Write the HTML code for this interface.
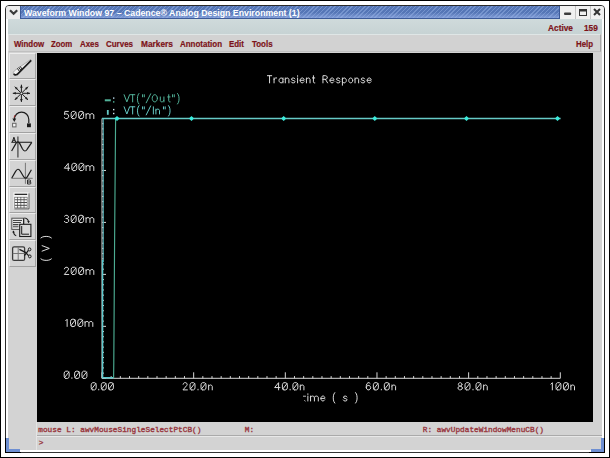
<!DOCTYPE html>
<html><head><meta charset="utf-8">
<style>
html,body{margin:0;padding:0;}
body{width:610px;height:458px;overflow:hidden;background:#fff;position:relative;font-family:"Liberation Sans",sans-serif;}
#outer{position:absolute;left:0;top:0;width:608px;height:456px;border:1px solid #000;}
#win{position:absolute;left:5px;top:5px;width:598px;height:446px;border:1px solid #2a2a2a;border-radius:4px 4px 0 0;background:#d3d3d3;}
#title{position:absolute;left:20px;top:6px;width:540px;border-right:1px solid #3c5a98;border-left:1px solid #3c5a98;height:13px;background:#5b7fc4;background-image:linear-gradient(rgba(255,255,255,0) 0%,rgba(255,255,255,0) 55%,rgba(150,175,230,0.7) 100%),repeating-linear-gradient(135deg,rgba(255,255,255,0.16) 0 1px,rgba(0,0,0,0.07) 1px 3px);border-bottom:1px solid #3c5a98;box-sizing:border-box;}
#ttext{position:absolute;left:24.4px;top:7px;font-size:9px;line-height:13px;font-weight:bold;color:#fff;white-space:nowrap;transform-origin:0 0;transform:scaleX(0.974);opacity:0.999;}
.mb{position:absolute;left:6px;top:6px;width:14px;height:13px;background:#ececec;border-radius:3px 0 0 0;}
.tb{position:absolute;top:6px;width:14px;height:13px;background:#f0f0f0;border-left:1px solid #c4c4c4;box-sizing:border-box;}
#info{position:absolute;left:8px;top:19px;width:594px;height:15px;background:linear-gradient(#cfdadb,#c7d3d4);}
#lw{position:absolute;left:6px;top:19px;width:2px;height:431px;background:#fff;}
#rw{position:absolute;left:602px;top:19px;width:2px;height:431px;background:#fff;}
#bw{position:absolute;left:6px;top:450px;width:598px;height:2px;background:#fff;border-bottom:1px solid #333;}
#menu{position:absolute;left:8px;top:34px;width:593px;height:18px;background:#d2d2d2;border:1px solid;border-color:#dfe6e6 #a8a8a8 #c0c0c0 #e0e0e0;box-sizing:border-box;}
.mi{position:absolute;font-size:9px;font-weight:bold;color:#7c1218;line-height:10px;height:10px;white-space:nowrap;opacity:0.999;-webkit-text-stroke:0.2px #7c1218;}
#plot{position:absolute;left:37px;top:53px;width:556px;height:369px;background:#000;}
.tbtn{position:absolute;left:9px;width:25px;background:#d4d4d4;border:1px solid;border-color:#ededed #a2a2a2 #a2a2a2 #ededed;box-sizing:content-box;}
.tbtn svg{position:absolute;left:0;top:0}
.st{position:absolute;top:425px;font-family:"Liberation Mono",monospace;font-size:7.78px;line-height:10px;font-weight:normal;color:#942e36;-webkit-text-stroke:0.35px #9a3a42;white-space:nowrap;opacity:0.999;}
#vsep{position:absolute;left:36px;top:422px;width:1px;height:28px;background:#e4e4e4;}
#sep{position:absolute;left:37px;top:435px;width:565px;height:1px;background:#aaa;border-bottom:1px solid #e8e8e8;}
.rc{position:absolute;background:#6e8fd2;}
</style></head><body>
<div id="outer"></div>
<div id="win"></div>
<div class="mb"></div>
<div id="title"></div>
<div id="ttext">Waveform Window 97 – Cadence® Analog Design Environment (1)</div>
<div class="tb" style="left:560px;width:15px;border-left:0"></div><div class="tb" style="left:575px;width:15px"></div><div class="tb" style="left:590px;border-radius:0 3px 0 0"></div>
<div id="info"></div>
<div id="menu"></div>
<div id="lw"></div><div id="rw"></div><div id="bw"></div>
<div class="mi" style="left:14px;top:39px;"><span style="display:inline-block;transform-origin:0 0;transform:scaleX(0.875)">Window</span></div><div class="mi" style="left:51px;top:39px;"><span style="display:inline-block;transform-origin:0 0;transform:scaleX(0.865)">Zoom</span></div><div class="mi" style="left:79.5px;top:39px;"><span style="display:inline-block;transform-origin:0 0;transform:scaleX(0.88)">Axes</span></div><div class="mi" style="left:106px;top:39px;"><span style="display:inline-block;transform-origin:0 0;transform:scaleX(0.885)">Curves</span></div><div class="mi" style="left:140.5px;top:39px;"><span style="display:inline-block;transform-origin:0 0;transform:scaleX(0.925)">Markers</span></div><div class="mi" style="left:180px;top:39px;"><span style="display:inline-block;transform-origin:0 0;transform:scaleX(0.885)">Annotation</span></div><div class="mi" style="left:229px;top:39px;"><span style="display:inline-block;transform-origin:0 0;transform:scaleX(0.88)">Edit</span></div><div class="mi" style="left:251.5px;top:39px;"><span style="display:inline-block;transform-origin:0 0;transform:scaleX(0.88)">Tools</span></div><div class="mi" style="left:576.3px;top:39px;"><span style="display:inline-block;transform-origin:0 0;transform:scaleX(0.875)">Help</span></div><div class="mi" style="left:547.8px;top:23px;"><span style="display:inline-block;transform-origin:0 0;transform:scaleX(0.925)">Active</span></div><div class="mi" style="left:583.6px;top:23px;"><span style="display:inline-block;transform-origin:0 0;transform:scaleX(0.92)">159</span></div>
<div id="plot"></div>
<div class="tbtn" style="top:53px;height:24px"></div><div class="tbtn" style="top:79px;height:25px"></div><div class="tbtn" style="top:106px;height:25px"></div><div class="tbtn" style="top:133px;height:25px"></div><div class="tbtn" style="top:160px;height:25px"></div><div class="tbtn" style="top:187px;height:24px"></div><div class="tbtn" style="top:213px;height:25px"></div><div class="tbtn" style="top:240px;height:25px"></div><svg width="40" height="280" viewBox="0 0 40 280" style="position:absolute;left:0;top:0"><path d="M13.3 72.4 L14.6 70.6 L30.7 59.5 L31.2 60.3 L17.2 74.3 L15.2 75 L13.5 74 Z" fill="#f0f0f0" stroke="#8a8a8a" stroke-width="0.6"/><path d="M13.6 74 L15.2 75 L17.3 74.4 L31.2 60.4" stroke="#1c1c1c" stroke-width="1.7" fill="none" stroke-linejoin="round"/><path d="M17.4 68.4 L19.6 71.6 M18.8 67.4 L21.0 70.4 M20.2 66.4 L22.2 69.2" stroke="#1c1c1c" stroke-width="1"/><path d="M21.4 93.3 L30.0 93.3" stroke="#1c1c1c" stroke-width="1"/><path d="M30.0 93.3 L27.0 94.6 L27.0 92.0 Z" fill="#1c1c1c"/><path d="M21.4 93.3 L28.0 99.9" stroke="#1c1c1c" stroke-width="1"/><path d="M28.0 99.9 L25.0 98.7 L26.8 96.9 Z" fill="#1c1c1c"/><path d="M21.4 93.3 L21.4 101.9" stroke="#1c1c1c" stroke-width="1"/><path d="M21.4 101.9 L20.1 98.9 L22.7 98.9 Z" fill="#1c1c1c"/><path d="M21.4 93.3 L14.8 99.9" stroke="#1c1c1c" stroke-width="1"/><path d="M14.8 99.9 L16.0 96.9 L17.8 98.7 Z" fill="#1c1c1c"/><path d="M21.4 93.3 L12.8 93.3" stroke="#1c1c1c" stroke-width="1"/><path d="M12.8 93.3 L15.8 92.0 L15.8 94.6 Z" fill="#1c1c1c"/><path d="M21.4 93.3 L14.8 86.7" stroke="#1c1c1c" stroke-width="1"/><path d="M14.8 86.7 L17.8 87.9 L16.0 89.7 Z" fill="#1c1c1c"/><path d="M21.4 93.3 L21.4 84.7" stroke="#1c1c1c" stroke-width="1"/><path d="M21.4 84.7 L22.7 87.7 L20.1 87.7 Z" fill="#1c1c1c"/><path d="M21.4 93.3 L28.0 86.7" stroke="#1c1c1c" stroke-width="1"/><path d="M28.0 86.7 L26.8 89.7 L25.0 87.9 Z" fill="#1c1c1c"/><circle cx="21.4" cy="93.3" r="0.9" fill="#e8e8e8"/><path d="M14.3 119.5 A7.2 7.4 0 0 1 28.8 119.5 L28.8 123" stroke="#1c1c1c" stroke-width="1.2" fill="none"/><path d="M12.4 118.6 L16.2 118.6 L14.3 122 Z" fill="#1c1c1c"/><path d="M14.0 117.5 L15.0 115.2" stroke="#a02020" stroke-width="1"/><rect x="12.6" y="123.3" width="3.4" height="3.6" fill="#f4f4f4" stroke="#666" stroke-width="1"/><rect x="27.0" y="123.4" width="3.9" height="3.8" fill="#1c1c1c"/><path d="M17.9 136.6 V157.6" stroke="#555" stroke-width="1.4"/><path d="M11.3 142.3 H31.9" stroke="#333" stroke-width="1.2"/><path d="M11.6 151 L16 143.4 Q17.9 140 19.8 143.6 L22.4 148.8 Q24.8 153 27.2 149.2 L31.8 142.4" stroke="#1c1c1c" stroke-width="1.2" fill="none"/><path d="M12.3 142 L13.9 137.2 L15.6 142 M12.9 140.3 H15" stroke="#1c1c1c" stroke-width="1" fill="none"/><path d="M25.4 162.8 V183.8" stroke="#777" stroke-width="1"/><path d="M11.3 178.3 H32.7" stroke="#777" stroke-width="1"/><path d="M11.8 178 L15.6 171.4 Q18 167.2 20.4 171.2 L23.2 176 Q25.4 180 27.4 176.6 L31.4 169.8" stroke="#1c1c1c" stroke-width="1.2" fill="none"/><path d="M27.5 180 V184 H29.8 Q31 184 31 183 Q31 182 29.8 182 H27.5 M29.6 182 Q30.7 182 30.7 181 Q30.7 180 29.6 180 H27.5" stroke="#1c1c1c" stroke-width="0.9" fill="none"/><rect x="13.4" y="192.4" width="15.2" height="16" fill="#f4f4f4"/><path d="M29.0 193.4 V208.9 H14.4" stroke="#555" stroke-width="0.9" fill="none"/><rect x="14.6" y="193.7" width="12.6" height="1.3" fill="#2a2a2a"/><rect x="14.4" y="196.9" width="13" height="11.2" fill="#4a4a4a"/><rect x="14.8" y="197.5" width="2.5" height="1.8" fill="#f8f8f8"/><rect x="18.0" y="197.5" width="2.5" height="1.8" fill="#f8f8f8"/><rect x="21.2" y="197.5" width="2.5" height="1.8" fill="#f8f8f8"/><rect x="24.4" y="197.5" width="2.5" height="1.8" fill="#f8f8f8"/><rect x="14.8" y="200.2" width="2.5" height="1.8" fill="#f8f8f8"/><rect x="18.0" y="200.2" width="2.5" height="1.8" fill="#f8f8f8"/><rect x="21.2" y="200.2" width="2.5" height="1.8" fill="#f8f8f8"/><rect x="24.4" y="200.2" width="2.5" height="1.8" fill="#f8f8f8"/><rect x="14.8" y="203.0" width="2.5" height="1.8" fill="#f8f8f8"/><rect x="18.0" y="203.0" width="2.5" height="1.8" fill="#f8f8f8"/><rect x="21.2" y="203.0" width="2.5" height="1.8" fill="#f8f8f8"/><rect x="24.4" y="203.0" width="2.5" height="1.8" fill="#f8f8f8"/><rect x="14.8" y="205.8" width="2.5" height="1.8" fill="#f8f8f8"/><rect x="18.0" y="205.8" width="2.5" height="1.8" fill="#f8f8f8"/><rect x="21.2" y="205.8" width="2.5" height="1.8" fill="#f8f8f8"/><rect x="24.4" y="205.8" width="2.5" height="1.8" fill="#f8f8f8"/><rect x="11.8" y="218.2" width="12" height="11.2" fill="#e6e6e6" stroke="#555" stroke-width="1"/><path d="M13 220.5 H22 M13 222.5 H21 M13 224.6 H18.5 M13 226.8 H18.5" stroke="#444" stroke-width="1.1"/><path d="M24.4 218 Q28.4 218.4 28.6 222.4" stroke="#1c1c1c" stroke-width="1.1" fill="none"/><path d="M27.3 221 L29.8 221 L28.6 223.2 Z" fill="#1c1c1c"/><path d="M13.4 231 Q13.6 235 16.2 235.6" stroke="#1c1c1c" stroke-width="1.1" fill="none"/><path d="M12.2 232.6 L14.8 232.4 L13.4 230.4 Z" fill="#1c1c1c"/><rect x="19.7" y="224.3" width="11.2" height="12.2" fill="#d8d8d8" stroke="#1c1c1c" stroke-width="1.1"/><path d="M21.7 226 V234.2 H29" stroke="#1c1c1c" stroke-width="1" fill="none"/><path d="M23.6 218.4 V224" stroke="#1c1c1c" stroke-width="1"/><rect x="12.6" y="246.8" width="12" height="13.6" rx="1.5" fill="#dcdcdc" stroke="#3a3a3a" stroke-width="1.3"/><path d="M18.2 247 V260.2 M12.8 253.5 H24.6" stroke="#777" stroke-width="1"/><path d="M19.4 249.4 L25.4 252.4 L28.6 255.6 M24.4 255.6 L28.4 250.4" stroke="#1c1c1c" stroke-width="1.3" fill="none"/><ellipse cx="29.6" cy="249.4" rx="1.3" ry="1.5" fill="none" stroke="#1c1c1c" stroke-width="1"/><ellipse cx="29.8" cy="256.4" rx="1.3" ry="1.5" fill="none" stroke="#1c1c1c" stroke-width="1"/></svg>
<svg id="psvg" width="610" height="458" viewBox="0 0 610 458" style="position:absolute;left:0;top:0"><path d="M102.0 118.5 L102.0 378.3 L560.3 378.3" stroke="#d8d8d8" stroke-width="1" fill="none"/>
<path d="M102.00 378.3 L102.00 372.3 M111.17 378.3 L111.17 376.1 M120.33 378.3 L120.33 376.1 M129.50 378.3 L129.50 376.1 M138.66 378.3 L138.66 376.1 M147.83 378.3 L147.83 376.1 M157.00 378.3 L157.00 376.1 M166.16 378.3 L166.16 376.1 M175.33 378.3 L175.33 376.1 M184.49 378.3 L184.49 376.1 M193.66 378.3 L193.66 372.3 M202.83 378.3 L202.83 376.1 M211.99 378.3 L211.99 376.1 M221.16 378.3 L221.16 376.1 M230.32 378.3 L230.32 376.1 M239.49 378.3 L239.49 376.1 M248.66 378.3 L248.66 376.1 M257.82 378.3 L257.82 376.1 M266.99 378.3 L266.99 376.1 M276.15 378.3 L276.15 376.1 M285.32 378.3 L285.32 372.3 M294.49 378.3 L294.49 376.1 M303.65 378.3 L303.65 376.1 M312.82 378.3 L312.82 376.1 M321.98 378.3 L321.98 376.1 M331.15 378.3 L331.15 376.1 M340.32 378.3 L340.32 376.1 M349.48 378.3 L349.48 376.1 M358.65 378.3 L358.65 376.1 M367.81 378.3 L367.81 376.1 M376.98 378.3 L376.98 372.3 M386.15 378.3 L386.15 376.1 M395.31 378.3 L395.31 376.1 M404.48 378.3 L404.48 376.1 M413.64 378.3 L413.64 376.1 M422.81 378.3 L422.81 376.1 M431.98 378.3 L431.98 376.1 M441.14 378.3 L441.14 376.1 M450.31 378.3 L450.31 376.1 M459.47 378.3 L459.47 376.1 M468.64 378.3 L468.64 372.3 M477.81 378.3 L477.81 376.1 M486.97 378.3 L486.97 376.1 M496.14 378.3 L496.14 376.1 M505.30 378.3 L505.30 376.1 M514.47 378.3 L514.47 376.1 M523.64 378.3 L523.64 376.1 M532.80 378.3 L532.80 376.1 M541.97 378.3 L541.97 376.1 M551.13 378.3 L551.13 376.1 M560.30 378.3 L560.30 372.3" stroke="#d8d8d8" stroke-width="1" fill="none"/>
<path d="M102.0 378.30 L106.0 378.30 M102.0 373.10 L104.0 373.10 M102.0 367.91 L104.0 367.91 M102.0 362.71 L104.0 362.71 M102.0 357.52 L104.0 357.52 M102.0 352.32 L104.0 352.32 M102.0 347.12 L104.0 347.12 M102.0 341.93 L104.0 341.93 M102.0 336.73 L104.0 336.73 M102.0 331.54 L104.0 331.54 M102.0 326.34 L106.0 326.34 M102.0 321.14 L104.0 321.14 M102.0 315.95 L104.0 315.95 M102.0 310.75 L104.0 310.75 M102.0 305.56 L104.0 305.56 M102.0 300.36 L104.0 300.36 M102.0 295.16 L104.0 295.16 M102.0 289.97 L104.0 289.97 M102.0 284.77 L104.0 284.77 M102.0 279.58 L104.0 279.58 M102.0 274.38 L106.0 274.38 M102.0 269.18 L104.0 269.18 M102.0 263.99 L104.0 263.99 M102.0 258.79 L104.0 258.79 M102.0 253.60 L104.0 253.60 M102.0 248.40 L104.0 248.40 M102.0 243.20 L104.0 243.20 M102.0 238.01 L104.0 238.01 M102.0 232.81 L104.0 232.81 M102.0 227.62 L104.0 227.62 M102.0 222.42 L106.0 222.42 M102.0 217.22 L104.0 217.22 M102.0 212.03 L104.0 212.03 M102.0 206.83 L104.0 206.83 M102.0 201.64 L104.0 201.64 M102.0 196.44 L104.0 196.44 M102.0 191.24 L104.0 191.24 M102.0 186.05 L104.0 186.05 M102.0 180.85 L104.0 180.85 M102.0 175.66 L104.0 175.66 M102.0 170.46 L106.0 170.46 M102.0 165.26 L104.0 165.26 M102.0 160.07 L104.0 160.07 M102.0 154.87 L104.0 154.87 M102.0 149.68 L104.0 149.68 M102.0 144.48 L104.0 144.48 M102.0 139.28 L104.0 139.28 M102.0 134.09 L104.0 134.09 M102.0 128.89 L104.0 128.89 M102.0 123.70 L104.0 123.70 M102.0 118.50 L106.0 118.50" stroke="#d8d8d8" stroke-width="1" fill="none"/>
<path d="M103.3 118.5 L103.3 262" stroke="#4fa8ae" stroke-width="1.1" fill="none"/>
<path d="M102.6 260 L102.6 377.8 L113.3 377.8" stroke="#5cc8cc" stroke-width="1.4" fill="none"/>
<path d="M113.6 378.3 L113.8 362 L114.6 240 L115.6 118.5" stroke="#4cac92" stroke-width="1.15" fill="none"/>
<path d="M102 118.5 L560.6 118.5" stroke="#66cac6" stroke-width="1.5" fill="none"/>
<path d="M114.4 118.5 L117 115.9 L119.6 118.5 L117 121.1 Z" fill="#3cecdc"/>
<path d="M188.9 118.5 L191.5 115.9 L194.1 118.5 L191.5 121.1 Z" fill="#3cecdc"/>
<path d="M281.09999999999997 118.5 L283.7 115.9 L286.3 118.5 L283.7 121.1 Z" fill="#3cecdc"/>
<path d="M372.2 118.5 L374.8 115.9 L377.40000000000003 118.5 L374.8 121.1 Z" fill="#3cecdc"/>
<path d="M463.9 118.5 L466.5 115.9 L469.1 118.5 L466.5 121.1 Z" fill="#3cecdc"/>
<path d="M554.9 118.5 L557.5 115.9 L560.1 118.5 L557.5 121.1 Z" fill="#3cecdc"/>
<path d="M267.40 75.70 L271.70 75.70 M269.55 75.70 L269.55 82.90 M274.06 77.95 L274.06 82.90 M274.06 79.66 L274.74 78.58 L275.60 77.95 L276.64 77.95 M282.95 77.95 L282.95 82.90 M282.95 79.30 L282.09 78.22 L281.14 77.95 L280.20 78.22 L279.34 79.12 L278.99 80.43 L279.34 81.73 L280.20 82.63 L281.14 82.90 L282.09 82.63 L282.95 81.55 M285.31 77.95 L285.31 82.90 M285.31 79.30 L286.17 78.31 L287.20 77.95 L288.14 78.22 L288.92 79.30 L288.92 82.90 M294.89 78.94 L294.20 78.13 L293.17 77.95 L292.13 78.13 L291.45 78.94 L291.79 79.93 L293.17 80.38 L294.54 80.83 L295.06 81.82 L294.37 82.72 L293.17 82.90 L292.05 82.72 L291.27 81.82 M297.59 77.95 L297.59 82.90 M297.59 76.33 L297.59 75.70 M300.11 80.29 L304.07 80.29 L304.07 79.39 L303.64 78.58 L302.95 78.04 L302.09 77.95 L301.23 78.22 L300.46 79.12 L300.11 80.43 L300.46 81.73 L301.23 82.63 L302.18 82.90 L303.12 82.63 L303.98 81.73 M306.43 77.95 L306.43 82.90 M306.43 79.30 L307.29 78.31 L308.32 77.95 L309.27 78.22 L310.04 79.30 L310.04 82.90 M313.43 75.70 L313.43 81.82 L313.77 82.63 L314.37 82.90 L314.80 82.90 M312.40 77.95 L314.72 77.95 M322.96 82.90 L322.96 75.70 L325.71 75.70 L326.74 76.15 L327.26 76.96 L327.26 78.04 L326.74 78.85 L325.71 79.30 L322.96 79.30 M325.36 79.30 L327.60 82.90 M329.96 80.29 L333.91 80.29 L333.91 79.39 L333.48 78.58 L332.80 78.04 L331.94 77.95 L331.08 78.22 L330.30 79.12 L329.96 80.43 L330.30 81.73 L331.08 82.63 L332.02 82.90 L332.97 82.63 L333.83 81.73 M339.88 78.94 L339.19 78.13 L338.16 77.95 L337.13 78.13 L336.44 78.94 L336.79 79.93 L338.16 80.38 L339.54 80.83 L340.05 81.82 L339.37 82.72 L338.16 82.90 L337.04 82.72 L336.27 81.82 M342.41 77.95 L342.41 85.24 M342.41 79.30 L343.27 78.22 L344.22 77.95 L345.16 78.22 L346.02 79.12 L346.37 80.43 L346.02 81.73 L345.16 82.63 L344.22 82.90 L343.27 82.63 L342.41 81.55 M352.68 80.43 L352.41 79.19 L351.69 78.28 L350.70 77.95 L349.71 78.28 L348.99 79.19 L348.72 80.43 L348.99 81.66 L349.71 82.57 L350.70 82.90 L351.69 82.57 L352.41 81.66 L352.68 80.43 M355.04 77.95 L355.04 82.90 M355.04 79.30 L355.90 78.31 L356.93 77.95 L357.87 78.22 L358.65 79.30 L358.65 82.90 M364.62 78.94 L363.93 78.13 L362.90 77.95 L361.86 78.13 L361.18 78.94 L361.52 79.93 L362.90 80.38 L364.27 80.83 L364.79 81.82 L364.10 82.72 L362.90 82.90 L361.78 82.72 L361.00 81.82 M367.14 80.29 L371.10 80.29 L371.10 79.39 L370.67 78.58 L369.98 78.04 L369.12 77.95 L368.26 78.22 L367.49 79.12 L367.14 80.43 L367.49 81.73 L368.26 82.63 L369.21 82.90 L370.15 82.63 L371.01 81.73" stroke="#dcdcdc" stroke-width="1.0" fill="none" stroke-linecap="round" stroke-linejoin="round" opacity="1.0"/>
<path d="M65.71 378.40 L64.63 377.68 L64.20 376.42 L64.20 373.18 L64.63 371.92 L65.71 371.20 L67.65 371.20 L68.73 371.92 L69.16 373.18 L69.16 376.42 L68.73 377.68 L67.65 378.40 L65.71 378.40 M64.52 377.59 L68.84 372.01 M71.88 378.40 L71.88 377.77 M76.11 378.40 L75.03 377.68 L74.60 376.42 L74.60 373.18 L75.03 371.92 L76.11 371.20 L78.05 371.20 L79.13 371.92 L79.56 373.18 L79.56 376.42 L79.13 377.68 L78.05 378.40 L76.11 378.40 M74.92 377.59 L79.24 372.01 M83.45 378.40 L82.37 377.68 L81.94 376.42 L81.94 373.18 L82.37 371.92 L83.45 371.20 L85.39 371.20 L86.47 371.92 L86.90 373.18 L86.90 376.42 L86.47 377.68 L85.39 378.40 L83.45 378.40 M82.26 377.59 L86.58 372.01" stroke="#dcdcdc" stroke-width="1.0" fill="none" stroke-linecap="round" stroke-linejoin="round" opacity="1.0"/>
<path d="M65.69 320.68 L67.13 319.24 L67.13 326.44 M72.08 326.44 L71.00 325.72 L70.57 324.46 L70.57 321.22 L71.00 319.96 L72.08 319.24 L74.02 319.24 L75.10 319.96 L75.53 321.22 L75.53 324.46 L75.10 325.72 L74.02 326.44 L72.08 326.44 M70.90 325.63 L75.21 320.05 M79.33 326.44 L78.25 325.72 L77.82 324.46 L77.82 321.22 L78.25 319.96 L79.33 319.24 L81.27 319.24 L82.35 319.96 L82.78 321.22 L82.78 324.46 L82.35 325.72 L81.27 326.44 L79.33 326.44 M78.14 325.63 L82.45 320.05 M85.06 321.49 L85.06 326.44 M85.06 322.66 L85.83 321.76 L86.95 321.49 L88.16 321.76 L88.93 322.66 L88.93 326.44 M88.93 322.66 L89.70 321.76 L90.82 321.49 L92.03 321.76 L92.80 322.66 L92.80 326.44" stroke="#dcdcdc" stroke-width="1.0" fill="none" stroke-linecap="round" stroke-linejoin="round" opacity="1.0"/>
<path d="M64.49 268.90 L64.88 267.91 L65.84 267.28 L67.19 267.28 L68.15 267.91 L68.54 268.90 L68.15 269.98 L64.30 274.48 L68.73 274.48 M72.71 274.48 L71.63 273.76 L71.20 272.50 L71.20 269.26 L71.63 268.00 L72.71 267.28 L74.65 267.28 L75.73 268.00 L76.16 269.26 L76.16 272.50 L75.73 273.76 L74.65 274.48 L72.71 274.48 M71.52 273.67 L75.84 268.09 M80.14 274.48 L79.06 273.76 L78.63 272.50 L78.63 269.26 L79.06 268.00 L80.14 267.28 L82.08 267.28 L83.16 268.00 L83.59 269.26 L83.59 272.50 L83.16 273.76 L82.08 274.48 L80.14 274.48 M78.95 273.67 L83.27 268.09 M86.06 269.53 L86.06 274.48 M86.06 270.70 L86.83 269.80 L87.95 269.53 L89.16 269.80 L89.93 270.70 L89.93 274.48 M89.93 270.70 L90.70 269.80 L91.82 269.53 L93.03 269.80 L93.80 270.70 L93.80 274.48" stroke="#dcdcdc" stroke-width="1.0" fill="none" stroke-linecap="round" stroke-linejoin="round" opacity="1.0"/>
<path d="M64.59 216.22 L65.74 215.32 L67.19 215.32 L68.35 216.22 L68.35 217.66 L67.19 218.56 L66.03 218.56 M67.19 218.56 L68.63 219.55 L68.63 221.35 L67.38 222.52 L65.74 222.52 L64.30 221.44 M72.71 222.52 L71.63 221.80 L71.20 220.54 L71.20 217.30 L71.63 216.04 L72.71 215.32 L74.65 215.32 L75.73 216.04 L76.16 217.30 L76.16 220.54 L75.73 221.80 L74.65 222.52 L72.71 222.52 M71.52 221.71 L75.84 216.13 M80.14 222.52 L79.06 221.80 L78.63 220.54 L78.63 217.30 L79.06 216.04 L80.14 215.32 L82.08 215.32 L83.16 216.04 L83.59 217.30 L83.59 220.54 L83.16 221.80 L82.08 222.52 L80.14 222.52 M78.95 221.71 L83.27 216.13 M86.06 217.57 L86.06 222.52 M86.06 218.74 L86.83 217.84 L87.95 217.57 L89.16 217.84 L89.93 218.74 L89.93 222.52 M89.93 218.74 L90.70 217.84 L91.82 217.57 L93.03 217.84 L93.80 218.74 L93.80 222.52" stroke="#dcdcdc" stroke-width="1.0" fill="none" stroke-linecap="round" stroke-linejoin="round" opacity="1.0"/>
<path d="M68.26 170.56 L68.26 163.36 L64.30 168.22 L69.63 168.22 M73.31 170.56 L72.23 169.84 L71.80 168.58 L71.80 165.34 L72.23 164.08 L73.31 163.36 L75.25 163.36 L76.33 164.08 L76.76 165.34 L76.76 168.58 L76.33 169.84 L75.25 170.56 L73.31 170.56 M72.12 169.75 L76.44 164.17 M80.44 170.56 L79.36 169.84 L78.93 168.58 L78.93 165.34 L79.36 164.08 L80.44 163.36 L82.38 163.36 L83.46 164.08 L83.89 165.34 L83.89 168.58 L83.46 169.84 L82.38 170.56 L80.44 170.56 M79.25 169.75 L83.57 164.17 M86.06 165.61 L86.06 170.56 M86.06 166.78 L86.83 165.88 L87.95 165.61 L89.16 165.88 L89.93 166.78 L89.93 170.56 M89.93 166.78 L90.70 165.88 L91.82 165.61 L93.03 165.88 L93.80 166.78 L93.80 170.56" stroke="#dcdcdc" stroke-width="1.0" fill="none" stroke-linecap="round" stroke-linejoin="round" opacity="1.0"/>
<path d="M68.35 111.40 L64.88 111.40 L64.49 114.55 L65.74 113.92 L67.00 113.92 L68.25 114.73 L68.73 116.17 L68.25 117.61 L67.00 118.60 L65.65 118.60 L64.30 117.61 M72.71 118.60 L71.63 117.88 L71.20 116.62 L71.20 113.38 L71.63 112.12 L72.71 111.40 L74.65 111.40 L75.73 112.12 L76.16 113.38 L76.16 116.62 L75.73 117.88 L74.65 118.60 L72.71 118.60 M71.52 117.79 L75.84 112.21 M80.14 118.60 L79.06 117.88 L78.63 116.62 L78.63 113.38 L79.06 112.12 L80.14 111.40 L82.08 111.40 L83.16 112.12 L83.59 113.38 L83.59 116.62 L83.16 117.88 L82.08 118.60 L80.14 118.60 M78.95 117.79 L83.27 112.21 M86.06 113.65 L86.06 118.60 M86.06 114.82 L86.83 113.92 L87.95 113.65 L89.16 113.92 L89.93 114.82 L89.93 118.60 M89.93 114.82 L90.70 113.92 L91.82 113.65 L93.03 113.92 L93.80 114.82 L93.80 118.60" stroke="#dcdcdc" stroke-width="1.0" fill="none" stroke-linecap="round" stroke-linejoin="round" opacity="1.0"/>
<path d="M92.71 389.90 L91.63 389.18 L91.20 387.92 L91.20 384.68 L91.63 383.42 L92.71 382.70 L94.65 382.70 L95.73 383.42 L96.16 384.68 L96.16 387.92 L95.73 389.18 L94.65 389.90 L92.71 389.90 M91.52 389.09 L95.84 383.51 M98.71 389.90 L98.71 389.27 M102.78 389.90 L101.70 389.18 L101.27 387.92 L101.27 384.68 L101.70 383.42 L102.78 382.70 L104.72 382.70 L105.80 383.42 L106.23 384.68 L106.23 387.92 L105.80 389.18 L104.72 389.90 L102.78 389.90 M101.59 389.09 L105.91 383.51 M109.95 389.90 L108.87 389.18 L108.44 387.92 L108.44 384.68 L108.87 383.42 L109.95 382.70 L111.89 382.70 L112.97 383.42 L113.40 384.68 L113.40 387.92 L112.97 389.18 L111.89 389.90 L109.95 389.90 M108.76 389.09 L113.08 383.51" stroke="#dcdcdc" stroke-width="1.0" fill="none" stroke-linecap="round" stroke-linejoin="round" opacity="1.0"/>
<path d="M183.15 384.32 L183.54 383.33 L184.50 382.70 L185.85 382.70 L186.81 383.33 L187.20 384.32 L186.81 385.40 L182.96 389.90 L187.39 389.90 M191.56 389.90 L190.48 389.18 L190.05 387.92 L190.05 384.68 L190.48 383.42 L191.56 382.70 L193.50 382.70 L194.58 383.42 L195.01 384.68 L195.01 387.92 L194.58 389.18 L193.50 389.90 L191.56 389.90 M190.38 389.09 L194.69 383.51 M198.02 389.90 L198.02 389.27 M202.53 389.90 L201.46 389.18 L201.02 387.92 L201.02 384.68 L201.46 383.42 L202.53 382.70 L204.48 382.70 L205.56 383.42 L205.99 384.68 L205.99 387.92 L205.56 389.18 L204.48 389.90 L202.53 389.90 M201.35 389.09 L205.66 383.51 M208.65 384.95 L208.65 389.90 M208.65 386.30 L209.51 385.31 L210.54 384.95 L211.49 385.22 L212.26 386.30 L212.26 389.90" stroke="#dcdcdc" stroke-width="1.0" fill="none" stroke-linecap="round" stroke-linejoin="round" opacity="1.0"/>
<path d="M278.58 389.90 L278.58 382.70 L274.62 387.56 L279.95 387.56 M283.90 389.90 L282.82 389.18 L282.39 387.92 L282.39 384.68 L282.82 383.42 L283.90 382.70 L285.84 382.70 L286.92 383.42 L287.35 384.68 L287.35 387.92 L286.92 389.18 L285.84 389.90 L283.90 389.90 M282.71 389.09 L287.03 383.51 M290.13 389.90 L290.13 389.27 M294.42 389.90 L293.34 389.18 L292.91 387.92 L292.91 384.68 L293.34 383.42 L294.42 382.70 L296.36 382.70 L297.44 383.42 L297.87 384.68 L297.87 387.92 L297.44 389.18 L296.36 389.90 L294.42 389.90 M293.23 389.09 L297.55 383.51 M300.31 384.95 L300.31 389.90 M300.31 386.30 L301.17 385.31 L302.20 384.95 L303.15 385.22 L303.92 386.30 L303.92 389.90" stroke="#dcdcdc" stroke-width="1.0" fill="none" stroke-linecap="round" stroke-linejoin="round" opacity="1.0"/>
<path d="M370.13 383.60 L369.17 382.70 L368.01 382.70 L366.86 383.78 L366.28 385.85 L366.28 387.65 L366.76 389.00 L367.92 389.90 L369.07 389.90 L370.23 389.00 L370.71 387.65 L370.23 386.30 L369.07 385.40 L367.92 385.40 L366.76 386.30 L366.28 387.65 M374.88 389.90 L373.80 389.18 L373.37 387.92 L373.37 384.68 L373.80 383.42 L374.88 382.70 L376.82 382.70 L377.90 383.42 L378.33 384.68 L378.33 387.92 L377.90 389.18 L376.82 389.90 L374.88 389.90 M373.70 389.09 L378.01 383.51 M381.34 389.90 L381.34 389.27 M385.85 389.90 L384.78 389.18 L384.34 387.92 L384.34 384.68 L384.78 383.42 L385.85 382.70 L387.80 382.70 L388.88 383.42 L389.31 384.68 L389.31 387.92 L388.88 389.18 L387.80 389.90 L385.85 389.90 M384.67 389.09 L388.98 383.51 M391.97 384.95 L391.97 389.90 M391.97 386.30 L392.83 385.31 L393.86 384.95 L394.81 385.22 L395.58 386.30 L395.58 389.90" stroke="#dcdcdc" stroke-width="1.0" fill="none" stroke-linecap="round" stroke-linejoin="round" opacity="1.0"/>
<path d="M461.99 384.41 L461.64 383.40 L460.72 382.78 L459.59 382.78 L458.67 383.40 L458.33 384.41 L458.67 385.42 L459.59 386.04 L460.72 386.04 L461.64 385.42 L461.99 384.41 M462.37 388.01 L461.95 386.90 L460.84 386.21 L459.47 386.21 L458.36 386.90 L457.94 388.01 L458.36 389.12 L459.47 389.81 L460.84 389.81 L461.95 389.12 L462.37 388.01 M466.54 389.90 L465.46 389.18 L465.03 387.92 L465.03 384.68 L465.46 383.42 L466.54 382.70 L468.48 382.70 L469.56 383.42 L469.99 384.68 L469.99 387.92 L469.56 389.18 L468.48 389.90 L466.54 389.90 M465.36 389.09 L469.67 383.51 M473.00 389.90 L473.00 389.27 M477.51 389.90 L476.44 389.18 L476.00 387.92 L476.00 384.68 L476.44 383.42 L477.51 382.70 L479.46 382.70 L480.54 383.42 L480.97 384.68 L480.97 387.92 L480.54 389.18 L479.46 389.90 L477.51 389.90 M476.33 389.09 L480.64 383.51 M483.63 384.95 L483.63 389.90 M483.63 386.30 L484.49 385.31 L485.52 384.95 L486.47 385.22 L487.24 386.30 L487.24 389.90" stroke="#dcdcdc" stroke-width="1.0" fill="none" stroke-linecap="round" stroke-linejoin="round" opacity="1.0"/>
<path d="M550.89 384.14 L552.33 382.70 L552.33 389.90 M557.49 389.90 L556.41 389.18 L555.98 387.92 L555.98 384.68 L556.41 383.42 L557.49 382.70 L559.43 382.70 L560.51 383.42 L560.94 384.68 L560.94 387.92 L560.51 389.18 L559.43 389.90 L557.49 389.90 M556.30 389.09 L560.62 383.51 M564.94 389.90 L563.87 389.18 L563.43 387.92 L563.43 384.68 L563.87 383.42 L564.94 382.70 L566.89 382.70 L567.97 383.42 L568.40 384.68 L568.40 387.92 L567.97 389.18 L566.89 389.90 L564.94 389.90 M563.76 389.09 L568.07 383.51 M570.89 384.95 L570.89 389.90 M570.89 386.30 L571.75 385.31 L572.78 384.95 L573.73 385.22 L574.50 386.30 L574.50 389.90" stroke="#dcdcdc" stroke-width="1.0" fill="none" stroke-linecap="round" stroke-linejoin="round" opacity="1.0"/>
<path d="M307.87 396.05 L307.87 401.00 M307.87 394.43 L307.87 393.80 M310.56 396.05 L310.56 401.00 M310.56 397.22 L311.34 396.32 L312.46 396.05 L313.66 396.32 L314.43 397.22 L314.43 401.00 M314.43 397.22 L315.21 396.32 L316.33 396.05 L317.53 396.32 L318.30 397.22 L318.30 401.00 M320.82 398.39 L324.78 398.39 L324.78 397.49 L324.35 396.68 L323.66 396.14 L322.80 396.05 L321.94 396.32 L321.17 397.22 L320.82 398.52 L321.17 399.83 L321.94 400.73 L322.89 401.00 L323.83 400.73 L324.69 399.83 M334.81 392.63 L333.95 393.98 L333.43 395.78 L333.26 397.85 L333.43 399.92 L333.95 401.72 L334.81 403.07 M346.90 397.04 L346.21 396.23 L345.18 396.05 L344.15 396.23 L343.46 397.04 L343.80 398.03 L345.18 398.48 L346.56 398.93 L347.07 399.92 L346.38 400.82 L345.18 401.00 L344.06 400.82 L343.29 399.92 M355.55 392.63 L356.41 393.98 L356.93 395.78 L357.10 397.85 L356.93 399.92 L356.41 401.72 L355.55 403.07" stroke="#dcdcdc" stroke-width="1.0" fill="none" stroke-linecap="round" stroke-linejoin="round" opacity="1.0"/>
<path d="M303.4 396.2 H305.6 M304.6 400.6 L305.2 401" stroke="#dcdcdc" stroke-width="1" fill="none" stroke-linecap="round" opacity="0.85"/>
<g transform="translate(49.8,260.9) rotate(-90)"><path d="M2.05 -8.87 L1.19 -7.52 L0.67 -5.72 L0.50 -3.65 L0.67 -1.58 L1.19 0.22 L2.05 1.57 M9.75 -7.70 L12.50 -0.50 L15.25 -7.70 M22.95 -8.87 L23.81 -7.52 L24.33 -5.72 L24.50 -3.65 L24.33 -1.58 L23.81 0.22 L22.95 1.57" stroke="#dcdcdc" stroke-width="1.0" fill="none" stroke-linecap="round" stroke-linejoin="round" opacity="1.0"/></g>
<path d="M124.10 94.70 L126.85 101.90 L129.60 94.70 M130.50 94.70 L134.80 94.70 M132.65 94.70 L132.65 101.90 M138.95 93.53 L138.09 94.88 L137.57 96.68 L137.40 98.75 L137.57 100.82 L138.09 102.62 L138.95 103.97 M142.57 94.70 L142.57 96.86 M144.29 94.70 L144.29 96.86 M146.20 102.80 L150.67 93.80 M157.36 98.30 L157.16 96.92 L156.60 95.75 L155.77 94.97 L154.78 94.70 L153.79 94.97 L152.96 95.75 L152.40 96.92 L152.20 98.30 L152.40 99.68 L152.96 100.85 L153.79 101.63 L154.78 101.90 L155.77 101.63 L156.60 100.85 L157.16 99.68 L157.36 98.30 M160.30 96.95 L160.30 100.55 L160.82 101.54 L161.68 101.90 L162.54 101.72 L163.22 101.18 L163.91 100.28 M163.91 96.95 L163.91 101.90 M168.73 94.70 L168.73 100.82 L169.08 101.63 L169.68 101.90 L170.11 101.90 M167.70 96.95 L170.02 96.95 M172.57 94.70 L172.57 96.86 M174.29 94.70 L174.29 96.86 M177.50 93.53 L178.36 94.88 L178.88 96.68 L179.05 98.75 L178.88 100.82 L178.36 102.62 L177.50 103.97" stroke="#52b39a" stroke-width="1.0" fill="none" stroke-linecap="round" stroke-linejoin="round"/>
<path d="M124.10 106.80 L126.85 114.00 L129.60 106.80 M130.50 106.80 L134.80 106.80 M132.65 106.80 L132.65 114.00 M139.05 105.63 L138.19 106.98 L137.67 108.78 L137.50 110.85 L137.67 112.92 L138.19 114.72 L139.05 116.07 M142.57 106.80 L142.57 108.96 M144.29 106.80 L144.29 108.96 M146.20 114.90 L150.67 105.90 M153.37 106.80 L153.37 114.00 M155.90 109.05 L155.90 114.00 M155.90 110.40 L156.76 109.41 L157.79 109.05 L158.74 109.32 L159.51 110.40 L159.51 114.00 M163.47 106.80 L163.47 108.96 M165.19 106.80 L165.19 108.96 M168.50 105.63 L169.36 106.98 L169.88 108.78 L170.05 110.85 L169.88 112.92 L169.36 114.72 L168.50 116.07" stroke="#66cac6" stroke-width="1.0" fill="none" stroke-linecap="round" stroke-linejoin="round"/>
<rect x="104.8" y="99.3" width="6" height="2" fill="#52b39a"/>
<rect x="106.9" y="110" width="1.8" height="4.8" fill="#66cac6"/>
<rect x="113" y="97.4" width="1.4" height="1.4" fill="#b8d8e8"/><rect x="113" y="101.2" width="1.4" height="1.4" fill="#52b39a"/>
<rect x="113" y="108.9" width="1.4" height="1.4" fill="#d0e8f0"/><rect x="113" y="112.8" width="1.4" height="1.4" fill="#d0e8f0"/></svg>
<div id="sep"></div><div id="vsep"></div>
<div class="st" style="left:38.3px">mouse L: awvMouseSingleSelectPtCB()</div>
<div class="st" style="left:244.8px">M:</div>
<div class="st" style="left:422.8px">R: awvUpdateWindowMenuCB()</div>
<div class="st" style="left:38.8px;top:438px">&gt;</div>
<div class="rc" style="left:6px;top:438px;width:3px;height:14px"></div><div class="rc" style="left:6px;top:449px;width:14px;height:3px"></div>
<div class="rc" style="left:601px;top:438px;width:3px;height:14px"></div><div class="rc" style="left:591px;top:449px;width:13px;height:3px"></div>
<div style="position:absolute;left:589px;top:452px;width:16px;height:1px;background:#000"></div><div style="position:absolute;left:5px;top:452px;width:16px;height:1px;background:#000"></div>
<div style="position:absolute;left:604px;top:438px;width:1px;height:15px;background:#000"></div><div style="position:absolute;left:5px;top:438px;width:1px;height:15px;background:#000"></div>
<svg width="610" height="20" style="position:absolute;left:0;top:0">
<path d="M10 10.3 L13.6 13.8 L17.2 10.3" stroke="#3a3a3a" stroke-width="2.2" fill="none" stroke-linecap="butt"/>
<rect x="564" y="12.4" width="7.2" height="2.6" rx="1" fill="#3c3c3c"/>
<rect x="579.5" y="9.5" width="7" height="6" fill="none" stroke="#333" stroke-width="1"/><rect x="579" y="9" width="8" height="2.5" fill="#333"/>
<path d="M594 9 L600 15 M600 9 L594 15" stroke="#333" stroke-width="2"/>
</svg>
</body></html>
